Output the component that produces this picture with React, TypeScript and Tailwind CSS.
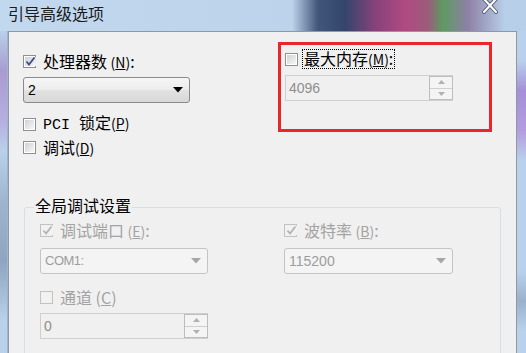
import clsx from "clsx";

function Check({ checked, disabled }: { checked?: boolean; disabled?: boolean }) {
  return (
    <span
      className={clsx(
        "w-[13px] h-[13px] shrink-0 border p-[1px] flex",
        disabled ? "border-[#c2c2c2]" : "border-[#8e8f8f] bg-white"
      )}
    >
      <span
        className={clsx(
          "flex-1 flex items-center justify-center",
          disabled
            ? "bg-[#f2f2f2]"
            : "bg-[linear-gradient(135deg,#cdd1d7,#f7f7f7)]"
        )}
      >
        {checked && (
          <svg width="11" height="11" viewBox="0 0 11 11" className="shrink-0">
            <path
              d="M1.5 5.5 L4 8.5 L9.5 1.5"
              fill="none"
              stroke={disabled ? "#b4b4b4" : "#3a4e8c"}
              strokeWidth="1.8"
            />
          </svg>
        )}
      </span>
    </span>
  );
}

function Arrow({ disabled }: { disabled?: boolean }) {
  return (
    <svg width="10" height="6" viewBox="0 0 10 6" className="shrink-0">
      <polygon points="0,0 10,0 5,5.5" fill={disabled ? "#a6a6a6" : "#000"} />
    </svg>
  );
}

function Combo({ value, disabled, narrow }: { value: string; disabled?: boolean; narrow?: boolean }) {
  return (
    <div
      className={clsx(
        "h-[26px] rounded-[3px] border flex items-center justify-between pl-[4px] pr-[6px]",
        disabled
          ? "border-[#c4c4c4] bg-[#f4f4f4] text-[#9d9d9d]"
          : "border-[#8a8a8a] bg-[linear-gradient(#f6f6f6,#ececec_50%,#e2e2e2_50%,#d8d8d8)] text-black"
      )}
    >
      <span
        className={clsx(
          "leading-[18px] font-['Liberation_Sans',sans-serif]",
          narrow ? "text-[13px] tracking-[-0.5px]" : "text-[14px]"
        )}
      >
        {value}
      </span>
      <Arrow disabled={disabled} />
    </div>
  );
}

function Spin({ value, w }: { value: string; w: string }) {
  return (
    <div className={clsx("h-[26px] flex border-t border-l border-b border-[#cfcfcf] bg-[#f0f0f0]", w)}>
      <span className="flex-1 pl-[3px] pt-[3px] text-[14px] leading-[18px] text-[#8e8e8e] font-['Liberation_Sans',sans-serif]">
        {value}
      </span>
      <div className="w-[24px] flex flex-col border border-[#bdbdbd] bg-[#f4f4f4]">
        <div className="flex-1 flex items-center justify-center border-b border-[#cfcfcf]">
          <svg width="7" height="4" viewBox="0 0 7 4">
            <polygon points="0,4 7,4 3.5,0" fill="#b0b0b0" />
          </svg>
        </div>
        <div className="flex-1 flex items-center justify-center">
          <svg width="7" height="4" viewBox="0 0 7 4">
            <polygon points="0,0 7,0 3.5,4" fill="#b0b0b0" />
          </svg>
        </div>
      </div>
    </div>
  );
}

function Key({ k }: { k: string }) {
  return (
    <span className="text-[14px]">
      (<u>{k}</u>)
    </span>
  );
}

export default function App() {
  return (
    <div className="w-[526px] h-[353px] overflow-hidden flex flex-col bg-[#b9d1ea] font-['Noto_Sans_CJK_SC',sans-serif] text-black">
      <div className="h-[31px] shrink-0 flex items-start justify-between pl-[8px] pr-[28px] bg-[linear-gradient(90deg,#c2d8ee_0px,#bcd3eb_292px,#42557a_318px,#34456c_345px,#86427a_375px,#b04a82_405px,#9b5c7a_428px,#5e9a62_443px,#8e80a6_468px,#b8cfe9_505px)]">
        <span className="mt-[3px] text-[16px] leading-[20px] text-[#1a1a1a]">引导高级选项</span>
        <svg width="16" height="15" viewBox="0 0 16 15" className="mt-[-1px]">
          <path d="M2 0 L14 13 M14 0 L2 13" stroke="#5a6270" strokeWidth="4" strokeLinecap="round" />
          <path d="M2 0 L14 13 M14 0 L2 13" stroke="#ffffff" strokeWidth="2" strokeLinecap="round" />
        </svg>
      </div>

      <div className="flex flex-1 min-h-0">
        <div className="w-[8px] bg-[linear-gradient(#b9d1ea_0px,#a99bd0_40px,#b7aee0_90px,#b9d1ea_120px,#9fb5cf_170px,#8ea4c0_230px,#b9d1ea_290px)] border-r border-[#9fb4cc]" />
        <div className="flex-1 bg-[#f0f0f0] border-t border-l border-r border-[#8b99a9] pt-[10px] overflow-hidden">
          <div className="flex items-start pl-[14px]">
            <div className="w-[167px] flex flex-col">
              <div className="mt-[10px] h-[18px] flex items-center gap-[7px]">
                <Check checked />
                <span className="text-[16px] leading-[18px]">
                  处理器数 <Key k="N" />:
                </span>
              </div>
              <div className="mt-[7px]">
                <Combo value="2" />
              </div>
              <div className="mt-[12px] h-[18px] flex items-center gap-[7px]">
                <Check />
                <span className="text-[16px] leading-[18px]">
                  <span className="font-['Liberation_Mono',monospace] text-[15px]">PCI </span>锁定<Key k="P" />
                </span>
              </div>
              <div className="mt-[5px] h-[18px] flex items-center gap-[7px]">
                <Check />
                <span className="text-[16px] leading-[18px]">
                  调试<Key k="D" />
                </span>
              </div>
            </div>

            <div className="ml-[88px] w-[214px] h-[90px] border-[3px] border-[#e8262b] pl-[4px] pt-[5px] flex flex-col">
              <div className="h-[18px] flex items-center gap-[4px]">
                <Check />
                <span className="border border-dotted border-black px-[1px] text-[16px] leading-[17px]">
                  最大内存<Key k="M" />:
                </span>
              </div>
              <div className="mt-[7px]">
                <Spin value="4096" w="w-[168px]" />
              </div>
            </div>
          </div>

          <fieldset className="mt-[40px] ml-[15px] w-[477px] h-[200px] border border-[#d5dfe5] rounded-[3px] pl-[9px]">
            <legend className="px-[1px] pb-[4px] text-[16px] leading-[18px]">全局调试设置</legend>
            <div className="ml-[6px] flex gap-[76px]">
              <div className="w-[168px] flex flex-col">
                <div className="mt-[3px] h-[18px] flex items-center gap-[7px]">
                  <Check checked disabled />
                  <span className="text-[16px] leading-[18px] text-[#a3a3a3]">
                    调试端口 <Key k="E" />:
                  </span>
                </div>
                <div className="mt-[9px]">
                  <Combo value="COM1:" disabled narrow />
                </div>
                <div className="mt-[14px] h-[18px] flex items-center gap-[7px]">
                  <Check disabled />
                  <span className="text-[16px] leading-[18px] text-[#a3a3a3]">
                    通道 (<u>C</u>)
                  </span>
                </div>
                <div className="mt-[7px]">
                  <Spin value="0" w="w-[168px]" />
                </div>
              </div>
              <div className="w-[169px] flex flex-col">
                <div className="mt-[3px] h-[18px] flex items-center gap-[7px]">
                  <Check checked disabled />
                  <span className="text-[16px] leading-[18px] text-[#a3a3a3]">
                    波特率 <Key k="B" />:
                  </span>
                </div>
                <div className="mt-[9px]">
                  <Combo value="115200" disabled />
                </div>
              </div>
            </div>
          </fieldset>
        </div>
        <div className="w-[9px] bg-[linear-gradient(#b9d1ea_0px,#b9d1ea_30px,#a58fd6_60px,#b49ddf_100px,#b9d1ea_130px,#b9d1ea_240px,#9cb2cc_270px,#b9d1ea_300px)]" />
      </div>
    </div>
  );
}
